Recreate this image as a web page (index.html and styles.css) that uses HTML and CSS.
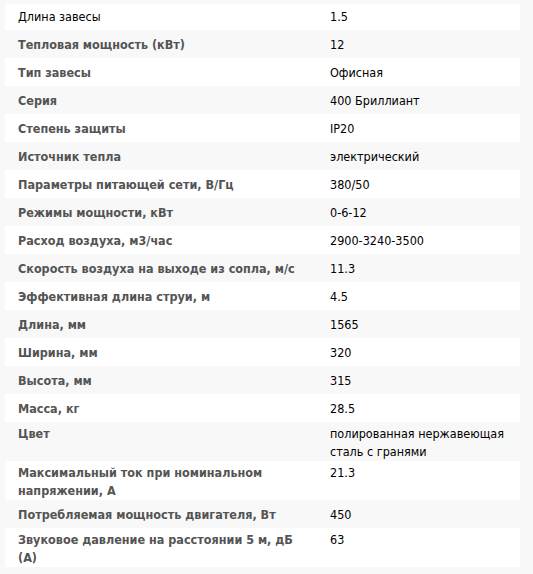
FILE: index.html
```html
<!DOCTYPE html>
<html lang="ru">
<head>
<meta charset="utf-8">
<title>Характеристики</title>
<link rel="stylesheet" href="styles.css">
</head>
<body>
<div class="specs">
  <div class="row first"><div class="label plain">Длина завесы</div><div class="value">1.5</div></div>
  <div class="row"><div class="label">Тепловая мощность (кВт)</div><div class="value">12</div></div>
  <div class="row"><div class="label">Тип завесы</div><div class="value">Офисная</div></div>
  <div class="row"><div class="label">Серия</div><div class="value">400 Бриллиант</div></div>
  <div class="row"><div class="label">Степень защиты</div><div class="value">IP20</div></div>
  <div class="row"><div class="label">Источник тепла</div><div class="value">электрический</div></div>
  <div class="row"><div class="label">Параметры питающей сети, В/Гц</div><div class="value">380/50</div></div>
  <div class="row"><div class="label">Режимы мощности, кВт</div><div class="value">0-6-12</div></div>
  <div class="row"><div class="label">Расход воздуха, м3/час</div><div class="value">2900-3240-3500</div></div>
  <div class="row"><div class="label">Скорость воздуха на выходе из сопла, м/с</div><div class="value">11.3</div></div>
  <div class="row"><div class="label">Эффективная длина струи, м</div><div class="value">4.5</div></div>
  <div class="row"><div class="label">Длина, мм</div><div class="value">1565</div></div>
  <div class="row"><div class="label">Ширина, мм</div><div class="value">320</div></div>
  <div class="row"><div class="label">Высота, мм</div><div class="value">315</div></div>
  <div class="row"><div class="label">Масса, кг</div><div class="value">28.5</div></div>
  <div class="row"><div class="label">Цвет</div><div class="value">полированная нержавеющая сталь с гранями</div></div>
  <div class="row"><div class="label">Максимальный ток при номинальном напряжении, А</div><div class="value">21.3</div></div>
  <div class="row"><div class="label">Потребляемая мощность двигателя, Вт</div><div class="value">450</div></div>
  <div class="row"><div class="label">Звуковое давление на расстоянии 5 м, дБ (А)</div><div class="value">63</div></div>
</div>
</body>
</html>
```
FILE: styles.css
```css
html, body {
  margin: 0;
  padding: 0;
  background: #f8f8f8;
}

body {
  font-family: "DejaVu Sans Condensed", "DejaVu Sans", sans-serif;
  font-stretch: condensed;
  font-size: 12.5px;
  color: #000;
}

.specs {
  width: 515px;
  margin: 4px 0 0 5px;
}

.row {
  display: grid;
  grid-template-columns: 325px 1fr;
  align-content: center;
  align-items: start;
  box-sizing: border-box;
  min-height: 28px;
  padding-top: 3px;
  line-height: 18px;
}

.row:nth-child(odd) {
  background: #ffffff;
}

.row:nth-child(even) {
  background: #f8f8f8;
}

.row.first {
  min-height: 25.5px;
  padding-top: 0;
}

.label {
  padding: 0 20px 0 13px;
  font-weight: bold;
  color: #545454;
}

.label.plain {
  font-weight: normal;
  color: #000;
}

.value {
  padding-right: 12px;
}
```
